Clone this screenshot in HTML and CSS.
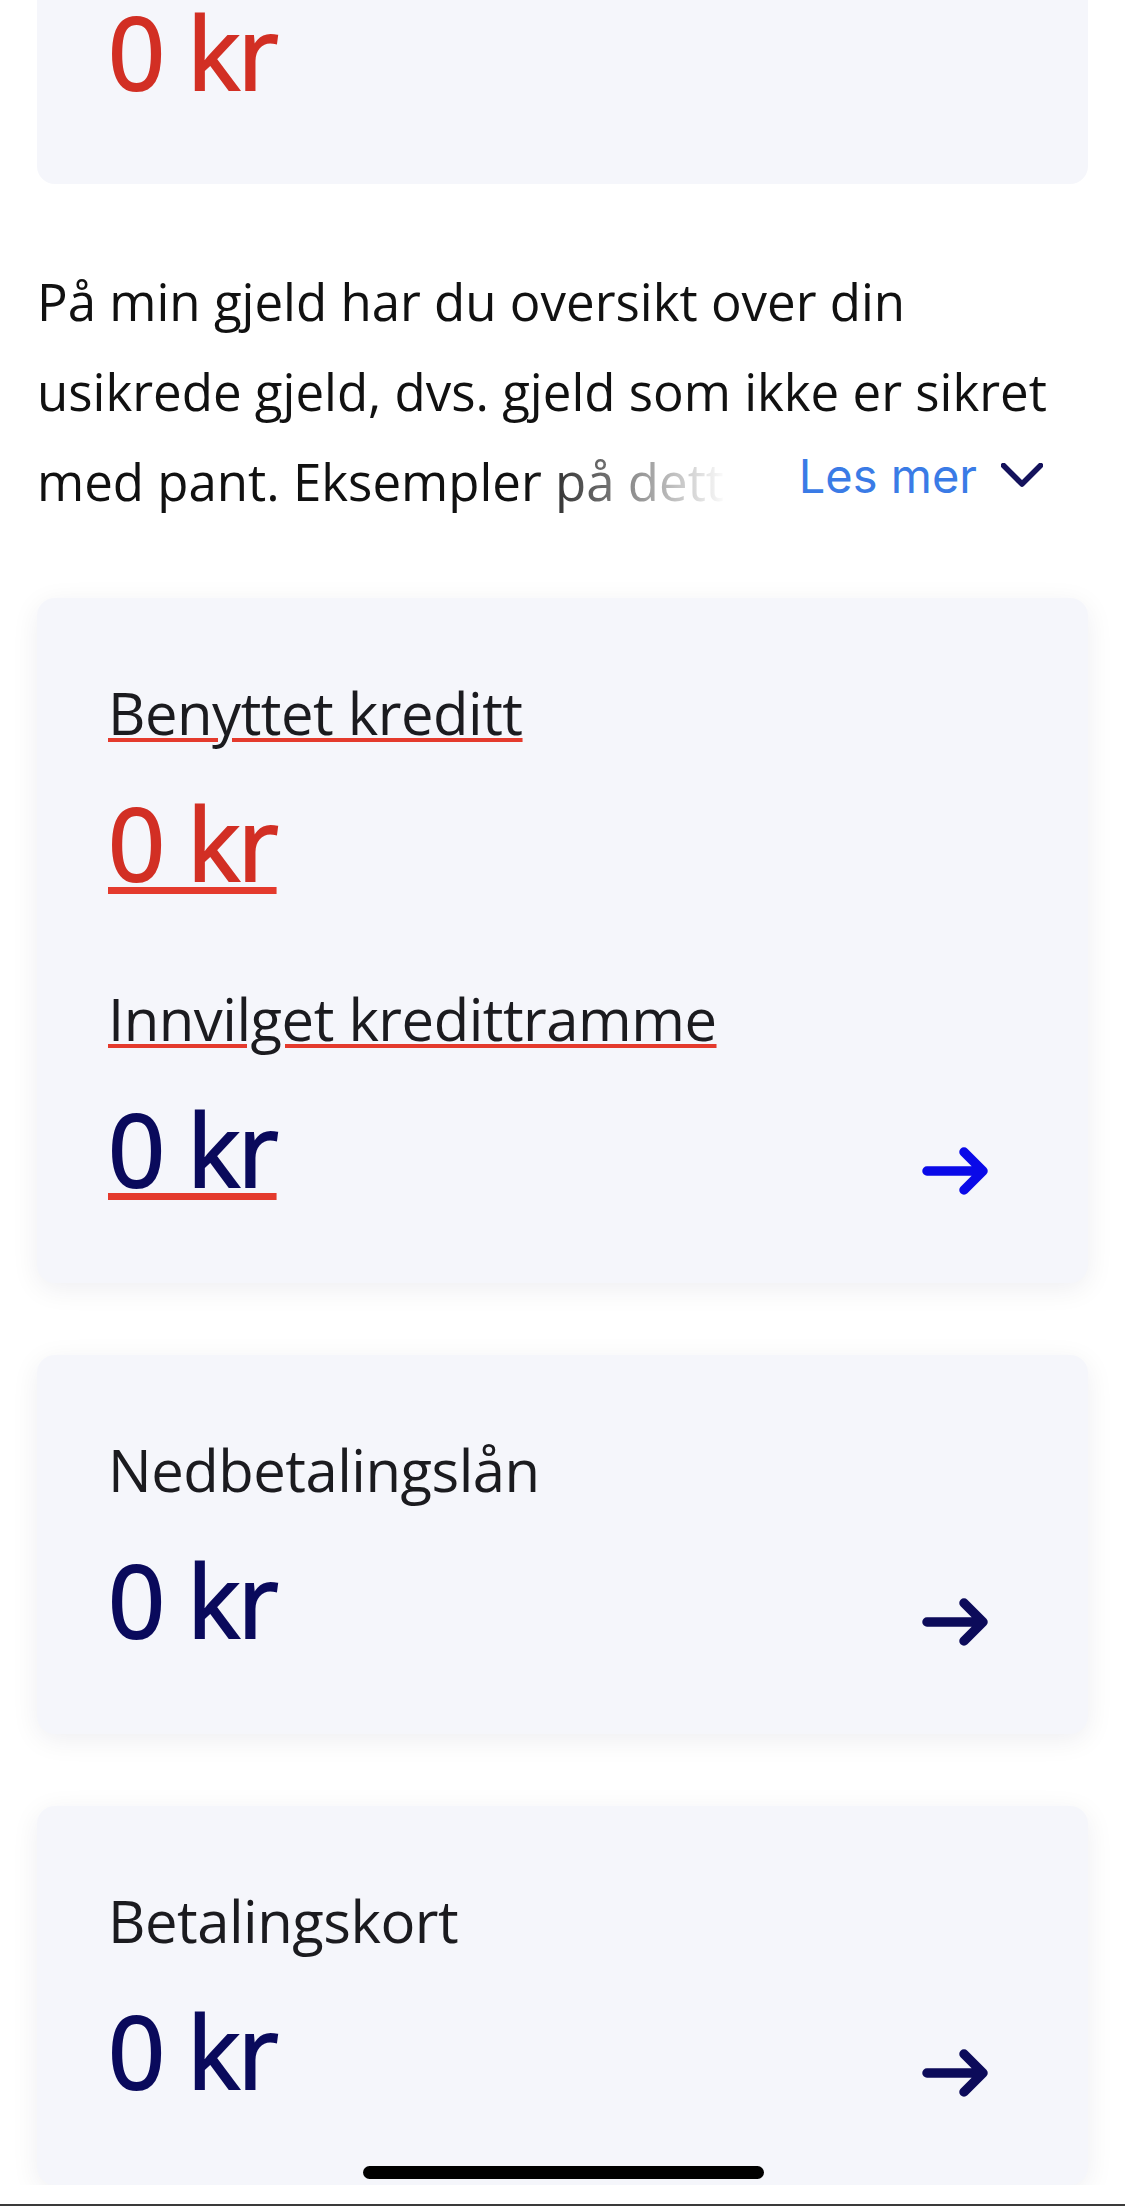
FILE: index.html
```html
<!DOCTYPE html>
<html lang="no">
<head>
  <meta charset="UTF-8" />
  <meta name="viewport" content="width=device-width, initial-scale=1.0"/>
  <title>Min gjeld</title>
  <link rel="stylesheet" href="styles.css">
</head>
<body>
  <main class="page">
    <section class="card card-top">
      <span class="amount amount-red amount-top">0 kr</span>
    </section>

    <div class="intro">
      <p class="intro-text">På min gjeld har du oversikt over din usikrede gjeld, dvs. gjeld som ikke er sikret med pant. Eksempler på dette er kredittkort, forbrukslån og nedbetalingslån uten sikkerhet.</p>
      <button class="read-more">
        Les mer
        <svg class="chevron" width="42" height="24" viewBox="0 0 42 24"><polyline points="2.5,2.5 21,21 39.5,2.5" /></svg>
      </button>
    </div>

    <section class="card">
      <div class="card-body">
        <div class="group">
          <span class="label linked">Benyttet kreditt</span>
          <span class="amount amount-red linked">0 kr</span>
        </div>
        <div class="group">
          <span class="label linked">Innvilget kredittramme</span>
          <span class="amount linked">0 kr</span>
        </div>
      </div>
      <svg class="arrow arrow-blue" width="66" height="50" viewBox="0 0 66 50"><path d="M5 25 H61 M42 6 L61 25 L42 44" /></svg>
    </section>

    <section class="card">
      <div class="card-body">
        <div class="group">
          <span class="label">Nedbetalingslån</span>
          <span class="amount">0 kr</span>
        </div>
      </div>
      <svg class="arrow" width="66" height="50" viewBox="0 0 66 50"><path d="M5 25 H61 M42 6 L61 25 L42 44" /></svg>
    </section>

    <section class="card">
      <div class="card-body">
        <div class="group">
          <span class="label">Betalingskort</span>
          <span class="amount">0 kr</span>
        </div>
      </div>
      <svg class="arrow" width="66" height="50" viewBox="0 0 66 50"><path d="M5 25 H61 M42 6 L61 25 L42 44" /></svg>
    </section>
  </main>

  <div class="home-bar"></div>
  <div class="screen-edge"></div>
</body>
</html>
```

FILE: styles.css
```css
body { margin: 0; background: #fff; font-family: "Open Sans", "Noto Sans", sans-serif; color: #1b1b1f; }

.page { display: flex; flex-direction: column; gap: 72px; padding: 0 37px; }

.card { display: flex; justify-content: space-between; align-items: flex-end; background: #f5f6fb; border-radius: 18px; padding: 80px 100px 80px 71px; box-shadow: 0 6px 28px rgba(20, 20, 60, 0.07); }
.card-top { border-radius: 0 0 18px 18px; padding-top: 0; padding-bottom: 82px; box-shadow: none; }

.card-body { display: flex; flex-direction: column; gap: 87px; }
.group { display: flex; flex-direction: column; align-items: flex-start; gap: 39px; }

.label { font-size: 58px; line-height: 70px; letter-spacing: -0.5px; color: #1b1b1f; }
.amount { font-size: 100px; line-height: 110px; font-weight: 400; letter-spacing: -2px; color: #0a0a5c; -webkit-text-stroke: 2px currentColor; }
.amount-red { color: #d22f24; }
.amount-top { line-height: 102px; }

.linked { text-decoration: underline; text-decoration-color: #e43a2d; text-decoration-thickness: 4px; text-underline-offset: 3px; }
.amount.linked { text-decoration-thickness: 7px; text-underline-offset: 6px; }

.arrow { margin-bottom: 7px; fill: none; stroke: #0c0b5a; stroke-width: 9.5; stroke-linecap: round; stroke-linejoin: round; }
.arrow-blue { stroke: #0a0ae8; }

.intro { position: relative; }
.intro-text { margin: 0; font-size: 51px; line-height: 90px; color: #111; max-height: 270px; overflow: hidden; }
.read-more { position: absolute; right: 0; bottom: 0; left: 490px; height: 90px; display: flex; align-items: center; justify-content: flex-end; gap: 24px; padding: 0 45px 12px 0; border: none; background: linear-gradient(to right, rgba(255, 255, 255, 0) 0, #fff 200px); font-family: Inter, "Liberation Sans", sans-serif; font-size: 47px; color: #3a7be6; cursor: pointer; }
.chevron { fill: none; stroke: #14125c; stroke-width: 5.5; stroke-linecap: round; stroke-linejoin: round; }

.home-bar { position: fixed; left: 50%; bottom: 27px; width: 401px; height: 13px; margin-left: -200px; border-radius: 7px; background: #000; }
.screen-edge { position: fixed; left: 0; right: 0; bottom: 0; height: 2px; background: #3a3a3a; }
```
